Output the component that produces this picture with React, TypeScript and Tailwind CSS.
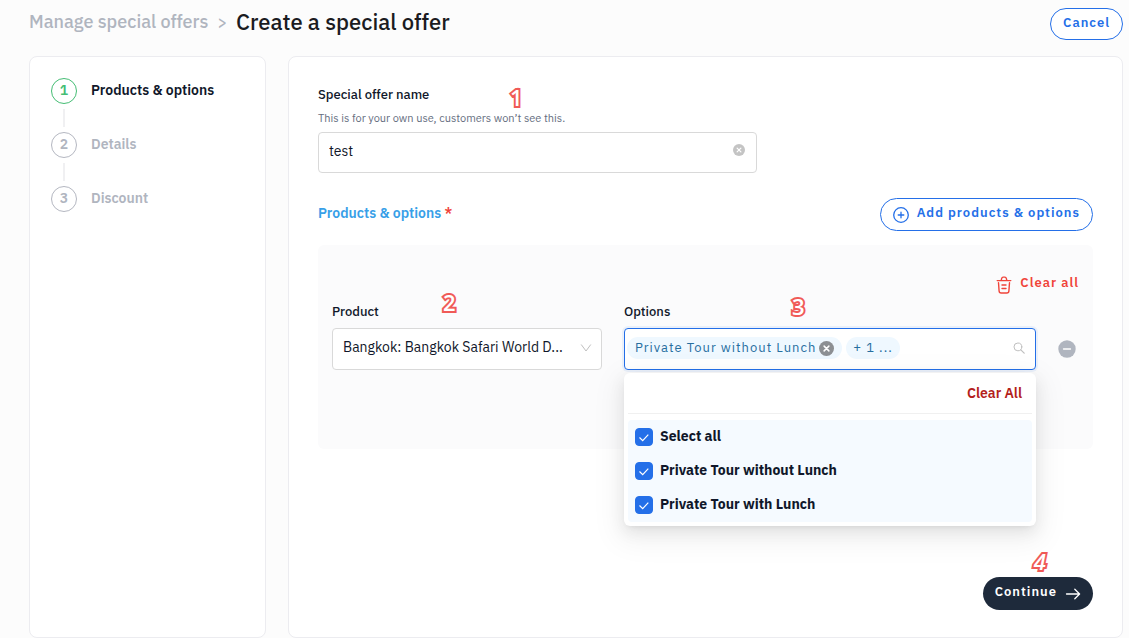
import { useState } from "react";
import clsx from "clsx";

const steps = [
  { label: "Products & options", active: true },
  { label: "Details", active: false },
  { label: "Discount", active: false },
];

const optionList = ["Select all", "Private Tour without Lunch", "Private Tour with Lunch"];

function Marker({ children, className }: { children: string; className: string }) {
  return (
    <span
      aria-hidden="true"
      className={clsx(
        "pointer-events-none absolute font-['Open_Sans',sans-serif] text-[22px] leading-6 font-semibold text-white [-webkit-text-stroke:4px_#f05a57] [paint-order:stroke_fill] [stroke-linejoin:round]",
        className,
      )}
    >
      {children}
    </span>
  );
}

function ClearIcon({ className }: { className: string }) {
  return (
    <svg viewBox="0 0 12 12" className={className} aria-hidden="true">
      <circle cx="6" cy="6" r="6" fill="currentColor" />
      <path d="M4.1 4.1l3.8 3.8M7.9 4.1L4.1 7.9" stroke="#fff" strokeWidth="1.2" strokeLinecap="round" />
    </svg>
  );
}

function PlusCircleIcon() {
  return (
    <svg viewBox="0 0 16 16" className="size-4" fill="none" stroke="currentColor" strokeWidth="1.3" strokeLinecap="round" aria-hidden="true">
      <circle cx="8" cy="8" r="7.3" />
      <path d="M8 5.2v5.6M5.2 8h5.6" />
    </svg>
  );
}

function TrashIcon() {
  return (
    <svg viewBox="0 0 16 18" className="h-[18px] w-4" fill="none" stroke="currentColor" strokeWidth="1.4" strokeLinecap="round" strokeLinejoin="round" aria-hidden="true">
      <path d="M1.2 4.6h13.600" />
      <path d="M5.2 4.4l.5-2.1c.2-.8.6-1.2 1.4-1.2h1.8c.8 0 1.2.4 1.4 1.2l.5 2.1" />
      <path d="M2.5 6.800l.6 8.200c.1 1.300.6 2 2 2h5.800c1.400 0 1.900-.7 2-2l.6-8.200" />
      <path d="M6 9h4M6 12.500h4" />
    </svg>
  );
}

function ChevronIcon() {
  return (
    <svg viewBox="0 0 12 8" className="pointer-events-none absolute top-4 right-2.5 h-2 w-3" fill="none" stroke="#bfbfbf" aria-hidden="true">
      <path d="M1.2 .5L6 7l4.8-6.5" />
    </svg>
  );
}

function SearchIcon() {
  return (
    <svg viewBox="0 0 12 12" className="size-3 shrink-0" fill="none" stroke="#bfbfbf" strokeLinecap="round" aria-hidden="true">
      <circle cx="4.9" cy="4.9" r="3.9" />
      <path d="M7.8 7.8l3.4 3.4" strokeWidth="1.2" />
    </svg>
  );
}

function Sidebar() {
  return (
    <nav aria-label="Steps" className="w-[237px] shrink-0 rounded-lg border border-[#ececf0] bg-white p-[21px]">
      <ol>
        {steps.map((step, i) => (
          <li key={step.label} className="flex gap-3.5">
            <div className="flex flex-col items-center">
              <span
                className={clsx(
                  "flex size-[26px] items-center justify-center rounded-full border pb-0.5 text-sm leading-5 font-semibold",
                  step.active ? "border-[#45bd74] text-[#45bd74]" : "border-[#b4b7c1] text-[#b0b5bf]",
                )}
              >
                {i + 1}
              </span>
              {i < steps.length - 1 && <span className="my-[5px] h-[18px] w-0.5 bg-[#f0f0f2]" />}
            </div>
            <span
              className={clsx(
                "text-sm leading-6 font-semibold",
                step.active ? "text-[#10172a]" : "text-[#b0b5bf]",
              )}
            >
              {step.label}
            </span>
          </li>
        ))}
      </ol>
    </nav>
  );
}

function OptionsMenu() {
  const [checked, setChecked] = useState([true, true, true]);
  const toggle = (i: number) => {
    const next = [...checked];
    next[i] = !next[i];
    if (i === 0) next.fill(next[0]);
    else next[0] = next[1] && next[2];
    setChecked(next);
  };
  return (
    <div className="absolute inset-x-0 top-full z-10 mt-[3px] rounded-md bg-white p-1 shadow-[0_6px_16px_0_rgba(0,0,0,0.08),0_9px_28px_8px_rgba(0,0,0,0.05),0_3px_6px_-4px_rgba(0,0,0,0.12)]">
      <div className="flex h-[37px] justify-end border-b border-[#f0f0f0] pr-2.5">
        <button
          type="button"
          onClick={() => setChecked([false, false, false])}
          className="h-8 text-sm leading-8 font-semibold text-[#b3211b]"
        >
          Clear All
        </button>
      </div>
      <div className="mt-1.5 rounded-sm bg-[#f5faff]">
        {optionList.map((option, i) => (
          <label key={option} className="flex h-[34px] items-center gap-[7px] px-[7px] text-sm font-bold text-[#10172a]">
            <span className="relative size-[18px]">
              <input
                type="checkbox"
                checked={checked[i]}
                onChange={() => toggle(i)}
                className="peer block size-[18px] appearance-none rounded border border-[#b4b7c1] bg-white checked:border-[#246fe8] checked:bg-[#246fe8]"
              />
              <svg
                viewBox="0 0 18 18"
                className="pointer-events-none absolute inset-0 hidden size-[18px] peer-checked:block"
                fill="none"
                stroke="#fff"
                strokeWidth="1.2"
                aria-hidden="true"
              >
                <path d="M4.5 9.5l3.2 3.1 5.6-6" />
              </svg>
            </span>
            <span className="pb-0.5 leading-8">{option}</span>
          </label>
        ))}
      </div>
    </div>
  );
}

export default function App() {
  const [name, setName] = useState("test");

  return (
    <div className="flex min-h-screen flex-col bg-[#fcfcfc] pr-1.5 pl-[29px] font-['IBM_Plex_Sans',Roboto,sans-serif] text-[#10172a]">
      <header className="flex h-14 items-start justify-between pt-2">
        <nav aria-label="Breadcrumb" className="flex items-center gap-[9px] font-medium">
          <a href="#offers" className="text-lg leading-7 text-[#b0b5bf]">Manage special offers</a>
          <span className="text-base leading-7 text-[#b0b5bf]">&gt;</span>
          <h1 className="text-[22px] leading-7 text-[#1b1b1f]">Create a special offer</h1>
        </nav>
        <button
          type="button"
          className="h-8 rounded-full border border-[#246fe8] bg-white px-3 pb-0.5 text-[13px] font-semibold tracking-[1px] text-[#246fe8]"
        >
          Cancel
        </button>
      </header>

      <div className="flex flex-1 gap-[22px]">
        <Sidebar />

        <main className="relative flex-1 rounded-lg border border-[#ececf0] bg-white px-[29px] pt-7 pb-[27px]">
          <section className="relative">
            <label htmlFor="offer-name" className="block text-[13px] leading-5 font-medium">
              Special offer name
            </label>
            <Marker className="top-0 left-48">1</Marker>
            <p className="mt-[3px] text-[11px] leading-5 text-[#656e80]">
              This is for your own use, customers won’t see this.
            </p>
            <div className="relative mt-1 w-[439px]">
              <input
                id="offer-name"
                type="text"
                value={name}
                onChange={(e) => setName(e.target.value)}
                className="block h-[41px] w-full rounded border border-[#d9d9d9] bg-white pr-8 pb-1 pl-2.5 text-sm outline-none"
              />
              <button type="button" aria-label="Clear name" onClick={() => setName("")} className="absolute top-3 right-3 text-[#c4c4c4]">
                <ClearIcon className="size-3" />
              </button>
            </div>
          </section>

          <div className="mt-[25px] flex items-center justify-between">
            <h2 className="pb-1 text-sm font-semibold text-[#389fe8]">
              Products &amp; options <span className="text-[#f0443a]">*</span>
            </h2>
            <button
              type="button"
              className="flex h-[33px] items-center gap-2 rounded-full border border-[#246fe8] px-3 text-[13px] font-semibold tracking-[1px] text-[#246fe8]"
            >
              <PlusCircleIcon />
              <span className="pb-[3px]">Add products &amp; options</span>
            </button>
          </div>

          <section className="relative mt-3.5 rounded-md bg-[#fbfbfc] px-3.5 pt-7 pb-[79px]">
            <div className="flex justify-end">
              <button type="button" className="flex h-5 items-center gap-2 text-[13px] font-semibold tracking-[1px] text-[#f0443a]">
                <span className="pt-1"><TrashIcon /></span>
                Clear all
              </button>
            </div>

            <div className="mt-[9px] grid grid-cols-[270fr_412fr_18px] gap-[22px] pr-[3px]">
              <div className="relative min-w-0">
                <label htmlFor="product" className="block text-[13px] leading-5 font-medium">Product</label>
                <Marker className="-top-3 left-[111px]">2</Marker>
                <div className="relative mt-1.5">
                  <select
                    id="product"
                    className="block h-[42px] w-full appearance-none truncate rounded border border-[#d9d9d9] bg-white pr-7 pb-1 pl-2.5 text-sm outline-none"
                  >
                    <option>Bangkok: Bangkok Safari World D...</option>
                  </select>
                  <ChevronIcon />
                </div>
              </div>

              <div className="relative min-w-0">
                <label htmlFor="options" className="block text-[13px] leading-5 font-medium">Options</label>
                <Marker className="-top-2 left-42">3</Marker>
                <div className="relative mt-1.5">
                  <div className="flex h-[42px] items-center gap-1 rounded border border-[#246fe8] bg-white pr-2.5 pb-0.5 pl-0.5 shadow-[0_0_0_2px_rgba(36,111,232,0.08)]">
                    <span className="flex h-[22px] shrink-0 items-center gap-[3px] rounded-full bg-[#eff8ff] px-2 text-[13px] tracking-[1px] text-[#276e9f]">
                      Private Tour without Lunch
                      <button type="button" aria-label="Remove Private Tour without Lunch" className="text-[#8c8f93]">
                        <ClearIcon className="size-[15px]" />
                      </button>
                    </span>
                    <span className="flex h-[22px] shrink-0 items-center rounded-full bg-[#eff8ff] px-[7px] text-[13px] tracking-[1px] text-[#276e9f]">
                      + 1 ...
                    </span>
                    <input id="options" type="text" role="combobox" aria-expanded="true" className="min-w-0 flex-1 bg-transparent outline-none" />
                    <SearchIcon />
                  </div>
                  <OptionsMenu />
                </div>
              </div>

              <button type="button" aria-label="Remove product" className="mt-[38px] size-[18px] text-[#b0b5bf]">
                <svg viewBox="0 0 18 18" className="size-[18px]" aria-hidden="true">
                  <circle cx="9" cy="9" r="8.7" fill="currentColor" />
                  <path d="M5.5 9h7" stroke="#fff" strokeWidth="1.3" strokeLinecap="round" />
                </svg>
              </button>
            </div>
          </section>

          <div className="mt-32 flex justify-end">
            <div className="relative">
              <Marker className="-top-7 left-[51px] italic">4</Marker>
              <button
                type="button"
                className="flex h-[33px] items-center gap-2 rounded-full bg-[#1e2a3b] px-3 text-[13px] font-semibold tracking-[1px] text-white"
              >
                <span className="pb-[3px]">Continue</span>
                <svg viewBox="0 0 16 12" className="h-3 w-4" fill="none" stroke="currentColor" strokeWidth="1.3" strokeLinecap="round" strokeLinejoin="round" aria-hidden="true">
                  <path d="M1.5 6h13M9.8 1.2L14.6 6l-4.8 4.8" />
                </svg>
              </button>
            </div>
          </div>
        </main>
      </div>
    </div>
  );
}
